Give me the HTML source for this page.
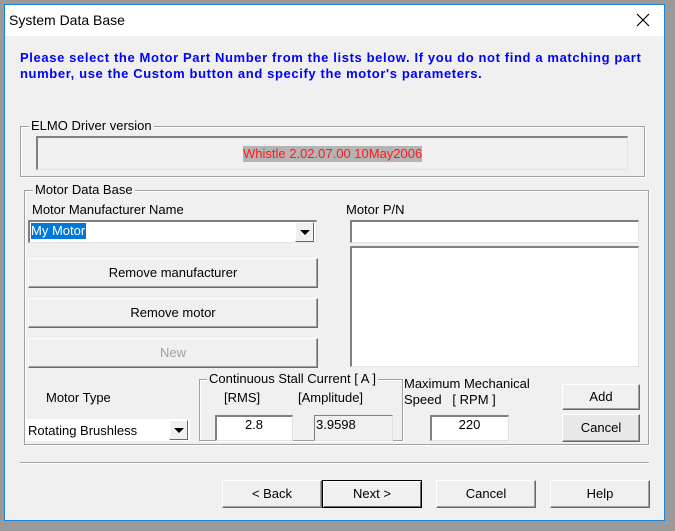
<!DOCTYPE html>
<html><head><meta charset="utf-8"><style>
*{margin:0;padding:0;box-sizing:border-box}
body{width:675px;height:531px;background:#9a9a9a;position:relative;overflow:hidden;font-family:"Liberation Sans",Arial,sans-serif;font-size:12px;color:#000}
.a{position:absolute}
#win{left:4px;top:4px;width:661px;height:517px;background:#f0f0f0;border:1px solid #1883d7}
#title{left:5px;top:5px;width:659px;height:31px;background:#fff}
.t{position:absolute;white-space:nowrap;line-height:14px}
.grp{position:absolute;border:1px solid #a0a0a0;box-shadow:inset 1px 1px 0 #fff,1px 1px 0 #fff}
.lbl{position:absolute;background:#f0f0f0;padding:0 2px;line-height:14px;white-space:nowrap}
.sunk{position:absolute;background:#fff;border-top:2px solid #808080;border-left:2px solid #808080;border-right:1px solid #e3e3e3;border-bottom:1px solid #e3e3e3}
.btn{position:absolute;background:#f0f0f0;border:1px solid;border-color:#fff #696969 #696969 #fff;box-shadow:inset -1px -1px 0 #a0a0a0;text-align:center;font-size:13px}
.dd{position:absolute;width:19px;background:#f0f0f0;border:1px solid;border-color:#fff #696969 #696969 #fff}
.dd:after{content:"";position:absolute;left:4px;top:7px;border-left:5px solid transparent;border-right:5px solid transparent;border-top:5px solid #000}
.n{font-family:"Liberation Sans Narrow","Liberation Sans",sans-serif;font-size:13px}
</style></head><body>
<div id="win" class="a"></div>
<div id="title" class="a"></div>
<div class="t" style="left:9px;top:13px;font-size:14px">System Data Base</div>
<svg class="a" style="left:636px;top:13px" width="14" height="14"><path d="M1 1L13 13M13 1L1 13" stroke="#000" stroke-width="1.2"/></svg>
<div class="t" style="left:20px;top:51px;color:#0000ff;font-weight:bold;font-size:13px;letter-spacing:0.62px">Please select the Motor Part Number from the lists below. If you do not find a matching part</div>
<div class="t" style="left:20px;top:67px;color:#0000ff;font-weight:bold;font-size:13px;letter-spacing:0.62px">number, use the Custom button and specify the motor's parameters.</div>

<div class="grp" style="left:20px;top:126px;width:625px;height:51px"></div>
<div class="lbl" style="left:29px;top:119px;font-size:13px">ELMO Driver version</div>
<div class="sunk" style="left:36px;top:136px;width:592px;height:34px;background:#f0f0f0"></div>
<div class="t" style="left:243px;top:146px;background:#b4b4b4;color:#ff1a1a;font-size:13px;line-height:16px">Whistle 2.02.07.00 10May2006</div>

<div class="grp" style="left:24px;top:190px;width:625px;height:255px"></div>
<div class="lbl" style="left:33px;top:183px;font-size:13px">Motor Data Base</div>
<div class="t" style="left:32px;top:203px;font-size:13px">Motor Manufacturer Name</div>
<div class="sunk" style="left:28px;top:220px;width:289px;height:23px"></div>
<div class="t" style="left:31px;top:223px;background:#0078d7;color:#fff;font-size:13px;line-height:16px;padding-right:1px">My Motor</div>
<div class="dd" style="left:295px;top:222px;height:20px"></div>
<div class="t" style="left:346px;top:203px;font-size:13px">Motor P/N</div>
<div class="sunk" style="left:350px;top:220px;width:289px;height:23px"></div>
<div class="sunk" style="left:350px;top:246px;width:289px;height:121px"></div>

<div class="btn" style="left:28px;top:258px;width:290px;height:30px;line-height:27px">Remove manufacturer</div>
<div class="btn" style="left:28px;top:298px;width:290px;height:30px;line-height:27px">Remove motor</div>
<div class="btn" style="left:28px;top:338px;width:290px;height:30px;line-height:27px;color:#a0a0a0">New</div>

<div class="t n" style="left:46px;top:391px">Motor Type</div>
<div class="a" style="left:26px;top:419px;width:164px;height:22px;background:#fff"></div>
<div class="t n" style="left:28px;top:424px">Rotating Brushless</div>
<div class="dd" style="left:169px;top:420px;height:20px"></div>

<div class="grp" style="left:199px;top:379px;width:204px;height:62px"></div>
<div class="lbl n" style="left:207px;top:372px">Continuous Stall Current [ A ]</div>
<div class="t n" style="left:224px;top:391px">[RMS]</div>
<div class="t n" style="left:298px;top:391px">[Amplitude]</div>
<div class="sunk" style="left:215px;top:415px;width:78px;height:26px"></div>
<div class="t n" style="left:215px;top:418px;width:78px;text-align:center">2.8</div>
<div class="sunk" style="left:314px;top:415px;width:79px;height:26px;background:#f0f0f0;border-width:1px"></div>
<div class="t n" style="left:316px;top:418px">3.9598</div>

<div class="t n" style="left:404px;top:377px">Maximum Mechanical</div>
<div class="t n" style="left:404px;top:393px">Speed &nbsp; [ RPM ]</div>
<div class="sunk" style="left:430px;top:415px;width:79px;height:26px"></div>
<div class="t n" style="left:430px;top:418px;width:79px;text-align:center">220</div>

<div class="btn n" style="left:562px;top:384px;width:78px;height:26px;line-height:24px">Add</div>
<div class="btn n" style="left:562px;top:414px;width:78px;height:28px;line-height:26px;background:#e8e8e8">Cancel</div>

<div class="a" style="left:20px;top:462px;width:629px;height:2px;border-top:1px solid #a0a0a0;border-bottom:1px solid #fff"></div>

<div class="btn n" style="left:222px;top:480px;width:100px;height:28px;line-height:26px">&lt; Back</div>
<div class="btn n" style="left:322px;top:480px;width:100px;height:28px;line-height:26px;border:1px solid #000;box-shadow:inset 1px 1px 0 #fff,inset -1px -1px 0 #696969">Next &gt;</div>
<div class="btn n" style="left:436px;top:480px;width:100px;height:28px;line-height:26px">Cancel</div>
<div class="btn n" style="left:550px;top:480px;width:100px;height:28px;line-height:26px">Help</div>
</body></html>
